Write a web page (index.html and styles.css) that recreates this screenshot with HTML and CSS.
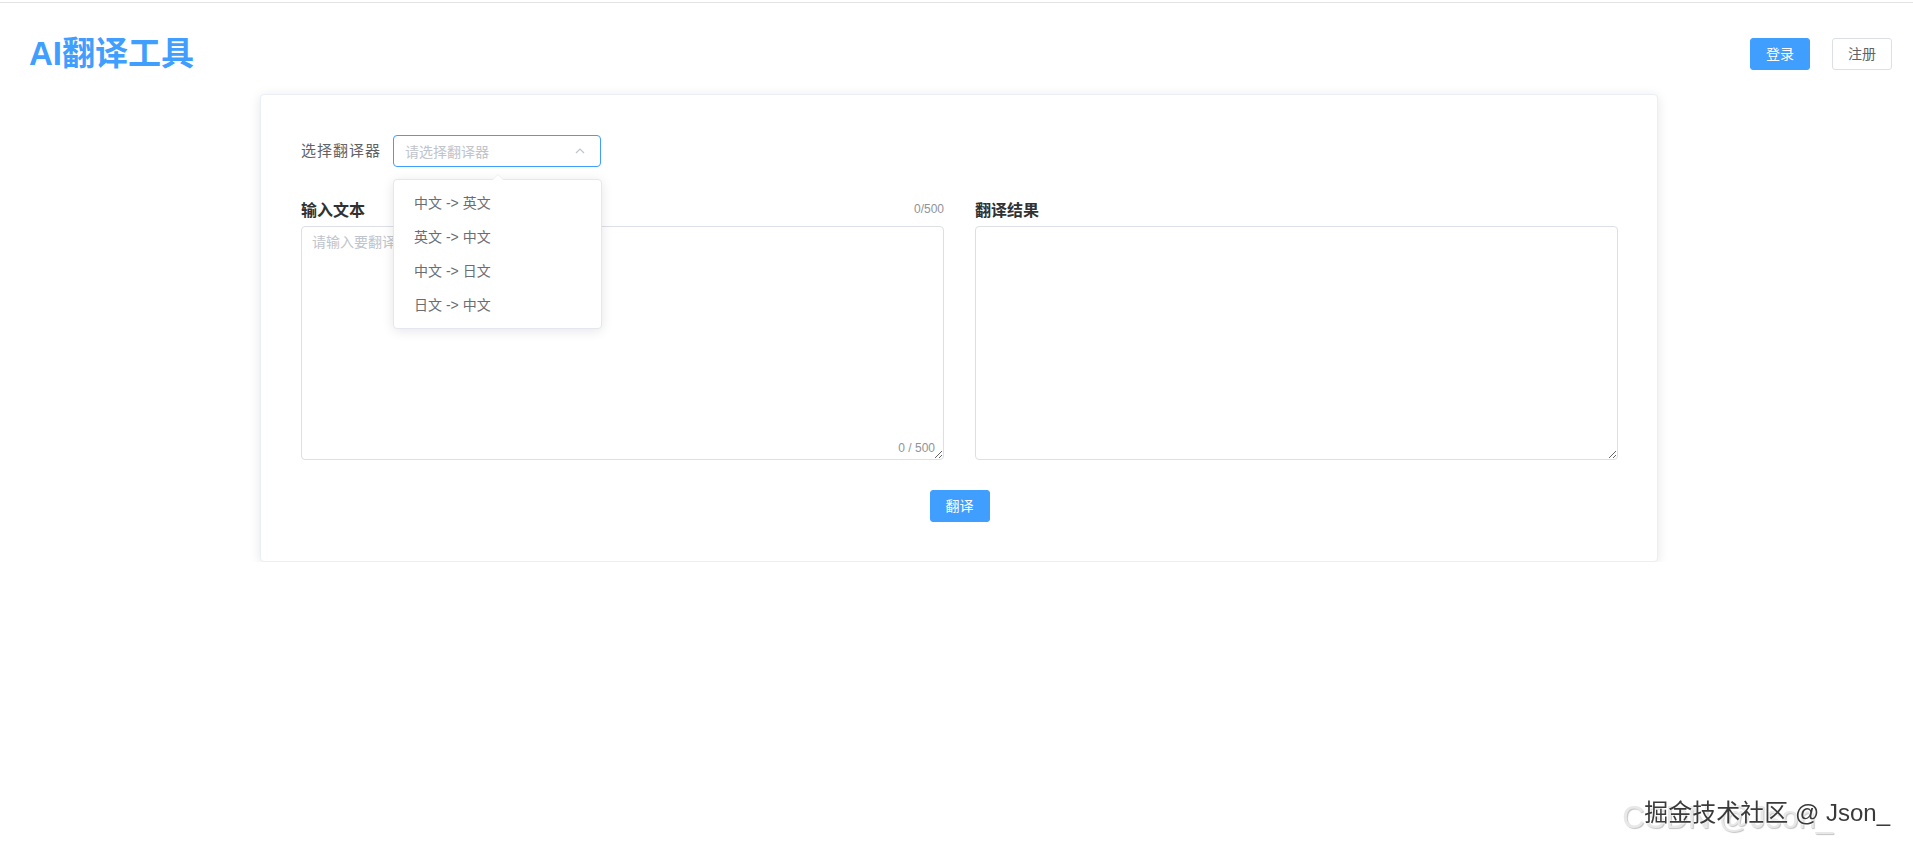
FILE: index.html
```html
<!DOCTYPE html>
<html lang="zh-CN">
<head>
  <meta charset="UTF-8">
  <meta name="viewport" content="width=device-width, initial-scale=1.0">
  <title>AI翻译工具</title>
  <link rel="stylesheet" href="styles.css">
</head>
<body>

<div class="header">
  <h1 class="logo">AI翻译工具</h1>
  <div class="actions">
    <button type="button" class="btn btn-primary">登录</button>
    <button type="button" class="btn btn-default">注册</button>
  </div>
</div>

<div class="card">
  <div class="form-row">
    <label class="form-label">选择翻译器</label>
    <div class="select">
      <div class="select-input">
        <span class="select-placeholder">请选择翻译器</span>
        <svg class="select-arrow" width="12" height="12" viewBox="0 0 12 12">
          <polyline points="2,8 6,4 10,8" fill="none" stroke="#c0c4cc" stroke-width="1.2"/>
        </svg>
      </div>
      <ul class="dropdown">
        <li>中文 -&gt; 英文</li>
        <li>英文 -&gt; 中文</li>
        <li>中文 -&gt; 日文</li>
        <li>日文 -&gt; 中文</li>
      </ul>
    </div>
  </div>

  <div class="panes">
    <div class="pane">
      <div class="pane-head">
        <span class="pane-title">输入文本</span>
        <span class="pane-count">0/500</span>
      </div>
      <div class="textarea-wrap">
        <textarea class="textarea" maxlength="500" placeholder="请输入要翻译的文本"></textarea>
        <span class="input-count">0 / 500</span>
      </div>
    </div>
    <div class="pane">
      <div class="pane-head">
        <span class="pane-title">翻译结果</span>
      </div>
      <div class="textarea-wrap">
        <textarea class="textarea" readonly></textarea>
      </div>
    </div>
  </div>

  <div class="submit">
    <button type="button" class="btn btn-primary">翻译</button>
  </div>
</div>

<div class="watermark">
  <span class="watermark-back">CSDN @Json_</span>
  <span class="watermark-front">掘金技术社区 @ Json_</span>
</div>

</body>
</html>
```

FILE: styles.css
```css
body {
  margin: 0;
  padding-top: 2px;
  background-color: #fff;
  font-family: "Liberation Sans", "Noto Sans CJK SC", sans-serif;
  color: #606266;
}
.header {
  border-top: 1px solid #e4e4e4;
  padding: 14px 21px 0 29px;
  height: 74px;
  display: flex;
  align-items: center;
  justify-content: space-between;
}
.logo {
  margin: 0;
  font-size: 33px;
  line-height: 38px;
  font-weight: bold;
  color: #409eff;
}
.actions {
  display: flex;
  gap: 22px;
}
.btn {
  height: 32px;
  padding: 0 15px;
  font-family: inherit;
  font-size: 14px;
  line-height: 30px;
  border-radius: 3px;
  border: 1px solid #dcdfe6;
  cursor: pointer;
}
.btn-primary {
  background-color: #409eff;
  border-color: #409eff;
  color: #fff;
}
.btn-default {
  background-color: #fff;
  color: #606266;
}
.card {
  margin: 3px 255px 0 260px;
  padding: 40px 39px 39px 40px;
  border: 1px solid #ebeef5;
  border-radius: 4px;
  background-color: #fff;
  box-shadow: 0 2px 12px 0 rgba(0, 0, 0, 0.1);
}
.form-row {
  display: flex;
  align-items: center;
  gap: 12px;
  margin-bottom: 30px;
}
.form-label {
  font-size: 15px;
  letter-spacing: 1px;
  color: #606266;
  line-height: 32px;
}
.select {
  position: relative;
  width: 208px;
}
.select-input {
  box-sizing: border-box;
  height: 32px;
  border: 1px solid #409eff;
  border-radius: 4px;
  padding: 0 14px 0 11px;
  display: flex;
  align-items: center;
  justify-content: space-between;
}
.select-placeholder {
  font-size: 14px;
  color: #c0c4cc;
}
.dropdown {
  position: absolute;
  top: 44px;
  left: 0;
  z-index: 10;
  box-sizing: border-box;
  width: 209px;
  margin: 0;
  padding: 6px 0;
  list-style: none;
  background-color: #fff;
  border: 1px solid #e4e7ed;
  border-radius: 4px;
  box-shadow: 0 2px 12px 0 rgba(0, 0, 0, 0.1);
}
/* little arrow pointing at the select */
.dropdown::before,
.dropdown::after {
  content: "";
  position: absolute;
  left: 98px;
  border: 6px solid transparent;
  border-top-width: 0;
}
.dropdown::before {
  top: -6px;
  border-bottom-color: #ebeef5;
}
.dropdown::after {
  top: -5px;
  border-bottom-color: #fff;
}
.dropdown li {
  height: 34px;
  line-height: 34px;
  padding: 0 20px;
  font-size: 14px;
  color: #6b6d71;
}
.panes {
  display: grid;
  grid-template-columns: 1fr 1fr;
  gap: 31px;
}
.pane-head {
  display: flex;
  align-items: center;
  justify-content: space-between;
  height: 24px;
  margin-bottom: 5px;
}
.pane-title {
  font-size: 16px;
  font-weight: bold;
  color: #303133;
}
.pane-count {
  font-size: 12px;
  color: #909399;
}
.textarea-wrap {
  position: relative;
}
.textarea {
  display: block;
  box-sizing: border-box;
  width: 100%;
  height: 234px;
  padding: 5px 10px;
  font-family: inherit;
  font-size: 14px;
  line-height: 1.5;
  color: #606266;
  border: 1px solid #dcdfe6;
  border-radius: 4px;
  resize: vertical;
  outline: none;
}
.textarea::placeholder {
  color: #c0c4cc;
}
.input-count {
  position: absolute;
  right: 9px;
  bottom: 4px;
  font-size: 12px;
  line-height: 16px;
  color: #909399;
  background-color: #fff;
}
.submit {
  display: flex;
  justify-content: center;
  margin-top: 30px;
}
/* site stamp in the bottom-right corner */
.watermark {
  position: fixed;
  right: 0;
  bottom: 0;
  width: 320px;
  height: 60px;
}
.watermark-back {
  position: absolute;
  right: 80px;
  bottom: 16px;
  font-size: 31px;
  line-height: 34px;
  white-space: nowrap;
  color: #e8e8e8;
  text-shadow: 1px 1px 1px #c4c4c4;
}
.watermark-front {
  position: absolute;
  right: 23px;
  bottom: 24px;
  font-size: 24px;
  line-height: 28px;
  white-space: nowrap;
  color: #3a3a3a;
  text-shadow: 0 0 2px #fff, 0 0 2px #fff;
}
```
